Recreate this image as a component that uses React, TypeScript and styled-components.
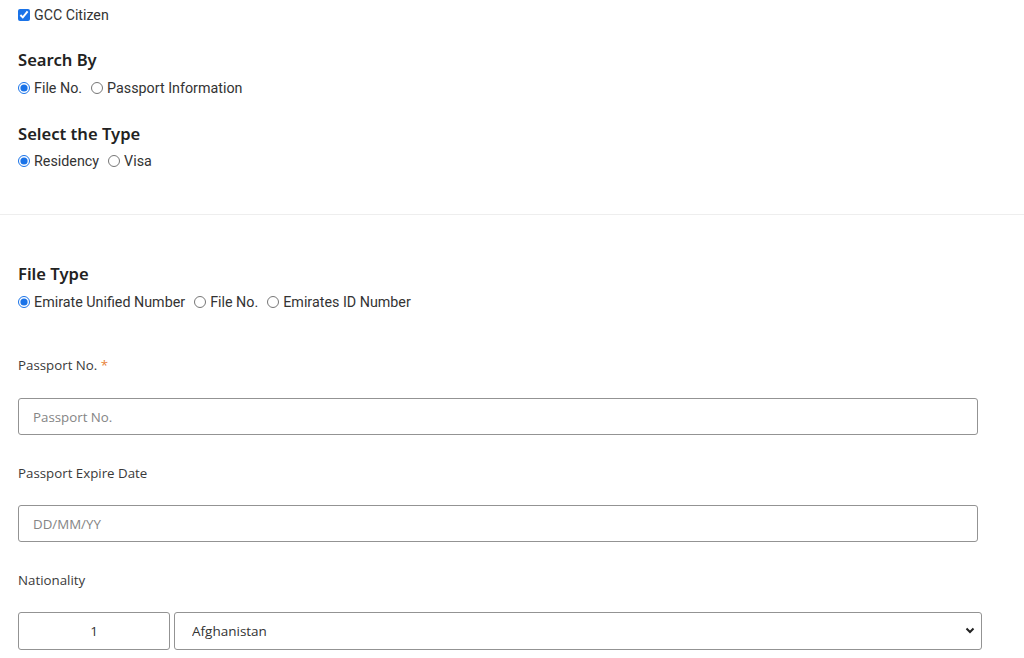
import React from "react";
import styled, { createGlobalStyle } from "styled-components";

const Global = createGlobalStyle`
  html, body { margin: 0; padding: 0; background: #fff; }
  body { font-family: Roboto, "Liberation Sans", sans-serif; color: #333; }
  * { box-sizing: border-box; }
`;

const Section = styled.div<{ $pt: number; $pb?: number }>`
  padding: ${(p) => p.$pt}px 0 ${(p) => p.$pb ?? 0}px 18px;
  display: flex;
  flex-direction: column;
`;

const CheckRow = styled.label`
  display: flex;
  align-items: center;
  height: 30px;
  font-size: 14.2px;
  color: #333;
`;

const Check = styled.input`
  width: 12px;
  height: 12px;
  margin: 0 4px 0 0;
  accent-color: #1a73e8;
`;

const Heading = styled.h3<{ $mt: number }>`
  margin: ${(p) => p.$mt}px 0 0 0;
  font-family: "Noto Sans", "Open Sans", sans-serif;
  font-weight: 600;
  font-size: 16.6px;
  line-height: 24px;
  color: #222;
`;

const RadioRow = styled.div<{ $mt: number }>`
  display: flex;
  align-items: center;
  height: 20px;
  margin-top: ${(p) => p.$mt}px;
  font-size: 14.3px;
  color: #333;
`;

const RadioLabel = styled.label`
  display: flex;
  align-items: center;
  margin-right: 9px;
`;

const Radio = styled.input`
  width: 12px;
  height: 12px;
  margin: 0 4px 0 0;
  accent-color: #1a73e8;
`;

const Divider = styled.hr`
  margin: 43px 0 0 0;
  border: 0;
  border-top: 1px solid #eeeeee;
`;

const FieldLabel = styled.div<{ $mt: number }>`
  margin-top: ${(p) => p.$mt}px;
  height: 20px;
  line-height: 20px;
  font-family: "Open Sans", "Noto Sans", sans-serif;
  font-size: 13.3px;
  color: #3a3a3a;
`;

const Star = styled.span`
  color: #e8833a;
`;

const TextInput = styled.input<{ $mt: number }>`
  margin-top: ${(p) => p.$mt}px;
  width: 960px;
  height: 37px;
  border: 1px solid #939393;
  border-radius: 3px;
  padding: 0 14px;
  font-family: "Open Sans", "Noto Sans", sans-serif;
  font-size: 13.3px;
  color: #333;
  outline: none;
  &::placeholder { color: #858585; }
`;

const NatRow = styled.div`
  margin-top: 22px;
  display: flex;
  gap: 4px;
  width: 964px;
`;

const CodeInput = styled.input`
  width: 152px;
  height: 38px;
  border: 1px solid #939393;
  border-radius: 3px;
  text-align: center;
  font-family: "Open Sans", "Noto Sans", sans-serif;
  font-size: 13.5px;
  color: #333;
  outline: none;
`;

const SelectWrap = styled.div`
  position: relative;
  flex: 1;
`;

const Select = styled.select`
  width: 100%;
  height: 38px;
  border: 1px solid #939393;
  border-radius: 3px;
  padding: 0 0 0 17px;
  font-family: "Open Sans", "Noto Sans", sans-serif;
  font-size: 13.5px;
  color: #333;
  background: #fff;
  appearance: none;
  outline: none;
`;

const Chevron = styled.svg`
  position: absolute;
  right: 7px;
  top: 15px;
  pointer-events: none;
`;

export default function App() {
  return (
    <>
      <Global />
      <Section $pt={0}>
        <CheckRow>
          <Check type="checkbox" defaultChecked />
          GCC Citizen
        </CheckRow>
        <Heading $mt={18}>Search By</Heading>
        <RadioRow $mt={6}>
          <RadioLabel>
            <Radio type="radio" name="by" defaultChecked />
            File No.
          </RadioLabel>
          <RadioLabel>
            <Radio type="radio" name="by" />
            Passport Information
          </RadioLabel>
        </RadioRow>
        <Heading $mt={24}>Select the Type</Heading>
        <RadioRow $mt={5}>
          <RadioLabel>
            <Radio type="radio" name="type" defaultChecked />
            Residency
          </RadioLabel>
          <RadioLabel>
            <Radio type="radio" name="type" />
            Visa
          </RadioLabel>
        </RadioRow>
      </Section>
      <Divider />
      <Section $pt={47}>
        <Heading $mt={0}>File Type</Heading>
        <RadioRow $mt={6}>
          <RadioLabel>
            <Radio type="radio" name="ft" defaultChecked />
            Emirate Unified Number
          </RadioLabel>
          <RadioLabel>
            <Radio type="radio" name="ft" />
            File No.
          </RadioLabel>
          <RadioLabel>
            <Radio type="radio" name="ft" />
            Emirates ID Number
          </RadioLabel>
        </RadioRow>
        <FieldLabel $mt={43}>
          Passport No. <Star>*</Star>
        </FieldLabel>
        <TextInput $mt={23} placeholder="Passport No." />
        <FieldLabel $mt={28}>Passport Expire Date</FieldLabel>
        <TextInput $mt={22} placeholder="DD/MM/YY" />
        <FieldLabel $mt={28}>Nationality</FieldLabel>
        <NatRow>
          <CodeInput defaultValue="1" />
          <SelectWrap>
            <Select defaultValue="af">
              <option value="af">Afghanistan</option>
            </Select>
            <Chevron width="10" height="7" viewBox="0 0 10 7">
              <path d="M1.5 1.5 L5 5 L8.5 1.5" fill="none" stroke="#222" strokeWidth="2" />
            </Chevron>
          </SelectWrap>
        </NatRow>
      </Section>
    </>
  );
}
